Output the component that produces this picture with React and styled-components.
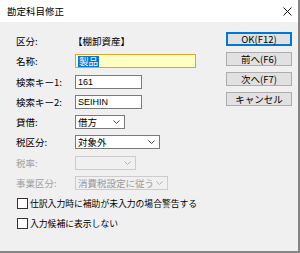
import { Fragment } from 'react';
import styled, { createGlobalStyle } from 'styled-components';

const Global = createGlobalStyle`
  html, body { margin: 0; padding: 0; background: #ffffff; }
  body { font-family: "Noto Sans CJK JP", "Liberation Sans", sans-serif; }
`

const Window = styled.div`
  width: 300px;
  height: 253px;
  box-sizing: border-box;
  border-right: 2px solid #858585;
  border-bottom: 2px solid #858585;
  background: #f0f0f0;
  display: flex;
  flex-direction: column;
  font-size: 9.5px;
  color: #000;
`

const TitleBar = styled.div`
  height: 22px;
  background: #ffffff;
  display: flex;
  align-items: center;
  justify-content: space-between;
  padding: 0 6px 0 7px;
`

const Title = styled.span`
  font-size: 9.5px;
`

const Body = styled.div`
  flex: 1;
  padding: 9px 0 0 16px;
  display: flex;
  flex-direction: column;
`

const Main = styled.div`
  display: flex;
  justify-content: space-between;
`

const Form = styled.div`
  display: grid;
  grid-template-columns: 59px auto;
  grid-auto-rows: 20.25px;
  align-items: center;
`

const Label = styled.span`
  color: ${(p) => (p.disabled ? '#a0a0a0' : '#000')};
  white-space: nowrap;
`

const Value = styled.span`
  margin-left: -2px;
`

const Field = styled.div`
  width: ${(p) => p.w}px;
  height: 14px;
  box-sizing: border-box;
  border: 1px solid ${(p) => (p.focus ? '#d9a92b' : '#7a7a7a')};
  background: ${(p) => (p.focus ? '#ffffc4' : '#ffffff')};
  display: flex;
  align-items: center;
  padding-left: 2px;
  font-family: "Liberation Sans", "Noto Sans CJK JP", sans-serif;
  font-size: 9px;
`

const Selected = styled.span`
  background: #0078d7;
  color: #ffffff;
  font-family: "Noto Sans CJK JP", sans-serif;
  font-size: 9.5px;
  line-height: 11px;
  padding: 0 1px;
`

const Select = styled.div`
  width: ${(p) => p.w}px;
  height: 14px;
  box-sizing: border-box;
  border: 1px solid ${(p) => (p.disabled ? '#cccccc' : '#7a7a7a')};
  background: ${(p) => (p.disabled ? '#f0f0f0' : '#ffffff')};
  color: ${(p) => (p.disabled ? '#9a9a9a' : '#000')};
  display: flex;
  align-items: center;
  justify-content: space-between;
  padding: 0 4px 0 2px;
  white-space: nowrap;
`

const Chevron = ({ color }) => (
  <svg width="7" height="4" viewBox="0 0 7 4">
    <polyline points="0.5,0.5 3.5,3.5 6.5,0.5" fill="none" stroke={color} strokeWidth="1" />
  </svg>
)

const Buttons = styled.div`
  display: flex;
  flex-direction: column;
  gap: 6px;
  padding-top: 1px;
  margin-right: 6px;
`

const Button = styled.div`
  width: 66px;
  height: 14px;
  box-sizing: border-box;
  border: 1px solid ${(p) => (p.primary ? '#0078d7' : '#adadad')};
  box-shadow: ${(p) => (p.primary ? 'inset 0 0 0 1px #0078d7' : 'none')};
  background: #e1e1e1;
  display: flex;
  align-items: center;
  justify-content: center;
  font-size: 9.5px;
`

const CheckRow = styled.div`
  height: 20.25px;
  display: flex;
  align-items: center;
  gap: 2px;
  white-space: nowrap;
  font-size: 8.8px;
`

const Box = styled.span`
  width: 11px;
  height: 11px;
  box-sizing: border-box;
  border: 1px solid #333333;
  background: #ffffff;
  margin-left: 1px;
`

const rows = [
  { label: '区分:', el: <Value>【棚卸資産】</Value> },
  { label: '名称:', el: <Field w={121} focus><Selected>製品</Selected></Field> },
  { label: '検索キー1:', el: <Field w={67}>161</Field> },
  { label: '検索キー2:', el: <Field w={67}>SEIHIN</Field> },
  { label: '貸借:', el: <Select w={50}>借方<Chevron color="#444" /></Select> },
  { label: '税区分:', el: <Select w={85}>対象外<Chevron color="#444" /></Select> },
  { label: '税率:', disabled: true, el: <Select w={61} disabled><span /><Chevron color="#b0b0b0" /></Select> },
  { label: '事業区分:', disabled: true, el: <Select w={93} disabled>消費税設定に従う<Chevron color="#b0b0b0" /></Select> },
]

const App = () => {
  return (
    <>
      <Global />
      <Window>
        <TitleBar>
          <Title>勘定科目修正</Title>
          <svg width="9" height="9" viewBox="0 0 9 9">
            <path d="M0.5 0.5 L8.5 8.5 M8.5 0.5 L0.5 8.5" stroke="#111" strokeWidth="1" />
          </svg>
        </TitleBar>
        <Body>
          <Main>
            <Form>
              {rows.map((r) => (
                <Fragment key={r.label}>
                  <Label disabled={r.disabled}>{r.label}</Label>
                  {r.el}
                </Fragment>
              ))}
            </Form>
            <Buttons>
              <Button primary>OK(F12)</Button>
              <Button>前へ(F6)</Button>
              <Button>次へ(F7)</Button>
              <Button>キャンセル</Button>
            </Buttons>
          </Main>
          <CheckRow><Box />仕訳入力時に補助が未入力の場合警告する</CheckRow>
          <CheckRow><Box />入力候補に表示しない</CheckRow>
        </Body>
      </Window>
    </>
  )
}
export default App
